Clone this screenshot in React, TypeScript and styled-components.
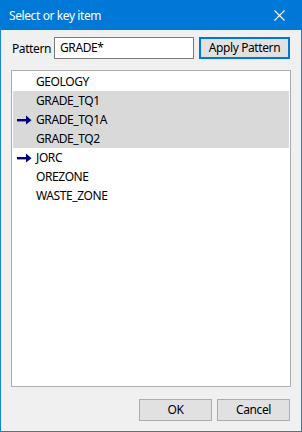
import styled, { createGlobalStyle } from "styled-components";

const GlobalStyle = createGlobalStyle`
  html, body {
    margin: 0;
    padding: 0;
    background: #f0f0f0;
  }
  * {
    box-sizing: border-box;
  }
`;

const Window = styled.div`
  width: 302px;
  height: 432px;
  display: flex;
  flex-direction: column;
  border: 1px solid #1883d7;
  border-top: none;
  background: #f0f0f0;
  font-family: "Noto Sans", "Open Sans", sans-serif;
  font-size: 12px;
  letter-spacing: -0.4px;
  color: #000;
`;

const TitleBar = styled.div`
  height: 30px;
  margin: 0 -1px;
  padding: 0 0 0 9px;
  display: flex;
  align-items: center;
  justify-content: space-between;
  background: #0078d7;
  color: #fff;
  font-size: 12px;
  .close {
    width: 46px;
    height: 30px;
    display: flex;
    align-items: center;
    justify-content: center;
  }
`;

const Body = styled.div`
  flex: 1;
  display: flex;
  flex-direction: column;
  padding: 7px 10px 10px 10px;
`;

const PatternRow = styled.div`
  display: flex;
  align-items: center;
  height: 22px;
  padding-left: 1px;
  label {
    width: 42px;
  }
`;

const PatternInput = styled.input`
  width: 140px;
  height: 22px;
  margin: 0;
  padding: 0 0 1px 5px;
  border: 1px solid #7a7a7a;
  background: #fff;
  font-family: inherit;
  font-size: 12px;
  letter-spacing: inherit;
  color: #000;
  outline: none;
`;

const Button = styled.button<{ $default?: boolean }>`
  height: 22px;
  margin: 0;
  padding: 0 0 1px 0;
  font-family: inherit;
  font-size: 12px;
  letter-spacing: inherit;
  color: #000;
  background: #e1e1e1;
  border: ${({ $default }) => ($default ? "2px solid #0078d7" : "1px solid #adadad")};
`;

const ApplyButton = styled(Button)`
  width: 91px;
  margin-left: 5px;
`;

const ListBox = styled.div`
  flex: 1;
  margin-top: 11px;
  padding: 1px;
  background: #fff;
  border: 1px solid #adadad;
  display: flex;
  flex-direction: column;
`;

const Row = styled.div<{ $selected?: boolean }>`
  height: 19px;
  display: flex;
  align-items: center;
  background: ${({ $selected }) => ($selected ? "#d9d9d9" : "transparent")};
  .mark {
    width: 23px;
    padding-left: 4px;
    display: flex;
    align-items: center;
  }
`;

const Footer = styled.div`
  display: flex;
  justify-content: flex-end;
  gap: 5px;
  margin-top: 12px;
  padding-right: 1px;
`;

const FooterButton = styled(Button)`
  width: 73px;
`;

const Arrow = () => (
  <svg width="15" height="10" viewBox="0 0 15 10">
    <rect x="0" y="4" width="10" height="2.4" fill="#000080" />
    <path d="M9 0.5 L14.5 5.2 L9 9.5 Z" fill="#000080" />
  </svg>
);

const items = [
  { name: "GEOLOGY", selected: false, marked: false },
  { name: "GRADE_TQ1", selected: true, marked: false },
  { name: "GRADE_TQ1A", selected: true, marked: true },
  { name: "GRADE_TQ2", selected: true, marked: false },
  { name: "JORC", selected: false, marked: true },
  { name: "OREZONE", selected: false, marked: false },
  { name: "WASTE_ZONE", selected: false, marked: false },
];

export default function App() {
  return (
    <>
      <GlobalStyle />
      <Window>
        <TitleBar>
          <span>Select or key item</span>
          <span className="close">
            <svg width="11" height="11" viewBox="0 0 11 11">
              <path d="M0.5 0.5 L10.5 10.5 M10.5 0.5 L0.5 10.5" stroke="#fff" strokeWidth="1.1" />
            </svg>
          </span>
        </TitleBar>
        <Body>
          <PatternRow>
            <label>Pattern</label>
            <PatternInput defaultValue="GRADE*" />
            <ApplyButton $default>Apply Pattern</ApplyButton>
          </PatternRow>
          <ListBox>
            {items.map((it) => (
              <Row key={it.name} $selected={it.selected}>
                <span className="mark">{it.marked && <Arrow />}</span>
                <span>{it.name}</span>
              </Row>
            ))}
          </ListBox>
          <Footer>
            <FooterButton>OK</FooterButton>
            <FooterButton>Cancel</FooterButton>
          </Footer>
        </Body>
      </Window>
    </>
  );
}
